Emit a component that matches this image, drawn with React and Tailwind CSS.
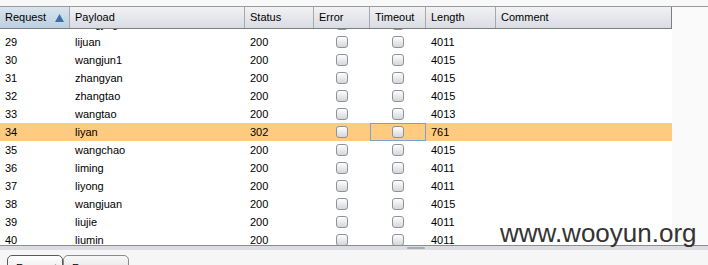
import React from "react";

const rows = [
  ["28", "wangjing", "200", "4015"],
  ["29", "lijuan", "200", "4011"],
  ["30", "wangjun1", "200", "4015"],
  ["31", "zhangyan", "200", "4015"],
  ["32", "zhangtao", "200", "4015"],
  ["33", "wangtao", "200", "4013"],
  ["34", "liyan", "302", "761"],
  ["35", "wangchao", "200", "4015"],
  ["36", "liming", "200", "4011"],
  ["37", "liyong", "200", "4011"],
  ["38", "wangjuan", "200", "4015"],
  ["39", "liujie", "200", "4011"],
  ["40", "liumin", "200", "4011"],
];

function Box() {
  return (
    <span className="block w-[12px] h-[12px] rounded-[3px] border border-[#8e9299] bg-gradient-to-b from-[#ffffff] to-[#d4d6da]" />
  );
}

const headers = [
  ["Request", "w-[70px]"],
  ["Payload", "w-[175px]"],
  ["Status", "w-[69px]"],
  ["Error", "w-[56px]"],
  ["Timeout", "w-[56px]"],
  ["Length", "w-[70px]"],
  ["Comment", "w-[175px]"],
];

export default function App() {
  return (
    <div
      className="relative w-[708px] h-[265px] overflow-hidden bg-[#f6f6f6] flex flex-col text-[11px] text-black"
      style={{ fontFamily: '"Liberation Sans", Arial, sans-serif' }}
    >
      <div className="h-[7px] shrink-0 bg-[#f8f8f8] border-b border-[#9a9a9a]" />
      <div className="flex h-[238px] shrink-0">
        <div className="w-[672px] flex flex-col bg-white">
          <div className="flex h-[22px] shrink-0 border-b border-[#7e7e7e] border-r border-r-[#7e7e7e]">
            {headers.map(([h, w], i) => (
              <div
                key={h}
                className={`${w} shrink-0 h-full flex items-center justify-between pl-[5px] pr-[4px] ${
                  i < headers.length - 1 ? "border-r border-[#a8a8ac]" : ""
                } ${
                  i === 0
                    ? "bg-gradient-to-b from-[#d9e4ee] to-[#bccfe0]"
                    : "bg-gradient-to-b from-[#f2f2f4] to-[#d9dce3]"
                }`}
              >
                <span>{h}</span>
                {i === 0 && (
                  <svg width="9" height="8" viewBox="0 0 9 8" className="mr-[1px]">
                    <polygon points="4.5,0 9,8 0,8" fill="#3d6fa8" />
                  </svg>
                )}
              </div>
            ))}
          </div>
          <div className="h-[216px] overflow-hidden">
            <div className="mt-[-14px]">
              {rows.map(([n, p, s, l]) => {
                const hl = n === "34";
                return (
                  <div
                    key={n}
                    className={`flex h-[18px] items-center ${hl ? "bg-[#fecb80]" : ""}`}
                  >
                    <div className="w-[70px] pl-[5px]">{n}</div>
                    <div className="w-[175px] pl-[5px]">{p}</div>
                    <div className="w-[69px] pl-[5px]">{s}</div>
                    <div className="w-[56px] h-full flex items-center justify-center">
                      <Box />
                    </div>
                    <div
                      className={`w-[56px] h-full flex items-center justify-center ${
                        hl ? "border border-[#7ba3d2]" : ""
                      }`}
                    >
                      <Box />
                    </div>
                    <div className="w-[70px] pl-[5px]">{l}</div>
                    <div className="w-[175px]" />
                  </div>
                );
              })}
            </div>
          </div>
        </div>
        <div className="flex-1 bg-[#fafafa]" />
      </div>
      <div className="h-[5px] shrink-0 border-t border-[#8c8c8c] bg-[#dcdde0] flex">
        <div className="ml-[407px] mt-[1px] w-[18px] h-[2px] rounded-[1px] bg-[#a7acb4]" />
      </div>
      <div className="flex-1 bg-[#f6f6f6] flex items-start pl-[7px] pt-[5px] gap-0">
        <div className="w-[56px] h-[20px] shrink-0 rounded-t-[5px] border border-[#5a5a5a] bg-gradient-to-b from-[#ffffff] to-[#e6e6e6] pl-[8px] pt-[4px]">
          Request
        </div>
        <div className="w-[66px] h-[20px] shrink-0 rounded-t-[5px] border border-[#8a8a8a] bg-gradient-to-b from-[#f8f8f8] to-[#e2e2e2] pl-[8px] pt-[4px]">
          Response
        </div>
      </div>
      <div
        className="absolute left-[500px] top-[220px] text-[26px] leading-[26px] text-[#333333]"
        style={{ fontFamily: '"Liberation Sans", Arial, sans-serif' }}
      >
        www.wooyun.org
      </div>
    </div>
  );
}
